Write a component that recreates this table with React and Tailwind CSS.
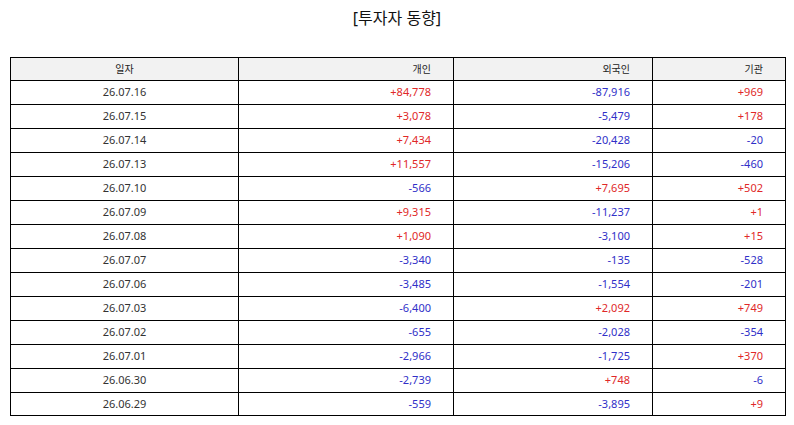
const rows = [
  ['26.07.16', '+84,778', '-87,916', '+969'],
  ['26.07.15', '+3,078', '-5,479', '+178'],
  ['26.07.14', '+7,434', '-20,428', '-20'],
  ['26.07.13', '+11,557', '-15,206', '-460'],
  ['26.07.10', '-566', '+7,695', '+502'],
  ['26.07.09', '+9,315', '-11,237', '+1'],
  ['26.07.08', '+1,090', '-3,100', '+15'],
  ['26.07.07', '-3,340', '-135', '-528'],
  ['26.07.06', '-3,485', '-1,554', '-201'],
  ['26.07.03', '-6,400', '+2,092', '+749'],
  ['26.07.02', '-655', '-2,028', '-354'],
  ['26.07.01', '-2,966', '-1,725', '+370'],
  ['26.06.30', '-2,739', '+748', '-6'],
  ['26.06.29', '-559', '-3,895', '+9'],
]

function Num({ v }) {
  const up = v.startsWith('+')
  return (
    <td className={`border border-black text-right pr-[22px] ${up ? 'text-[#e02828]' : 'text-[#3030c8]'}`}>
      {v}
    </td>
  )
}

export default function App() {
  return (
    <div
      className="w-[794px] h-[425px] bg-white px-[10px] pt-[6px]"
      style={{ fontFamily: '"Noto Sans", "Noto Sans CJK KR", sans-serif' }}
    >
      <h1 className="text-center text-[16px] leading-[24px] text-[#111] mb-[27px]">[투자자 동향]</h1>

      <table className="w-[775px] border-collapse table-fixed text-[11px] text-[#333]">
        <colgroup>
          <col className="w-[228px]" />
          <col className="w-[215px]" />
          <col className="w-[199px]" />
          <col className="w-[133px]" />
        </colgroup>
        <thead>
          <tr className="h-[23px] bg-[#f2f2f2] text-[10px] text-[#222]">
            <th className="border border-black font-normal text-center">일자</th>
            <th className="border border-black font-normal text-right pr-[22px]">개인</th>
            <th className="border border-black font-normal text-right pr-[22px]">외국인</th>
            <th className="border border-black font-normal text-right pr-[22px]">기관</th>
          </tr>
        </thead>
        <tbody>
          {rows.map(([d, a, b, c], i) => (
            <tr key={d} className={i === rows.length - 1 ? 'h-[23px]' : 'h-[24px]'}>
              <td className="border border-black text-center">{d}</td>
              <Num v={a} />
              <Num v={b} />
              <Num v={c} />
            </tr>
          ))}
        </tbody>
      </table>
    </div>
  )
}
